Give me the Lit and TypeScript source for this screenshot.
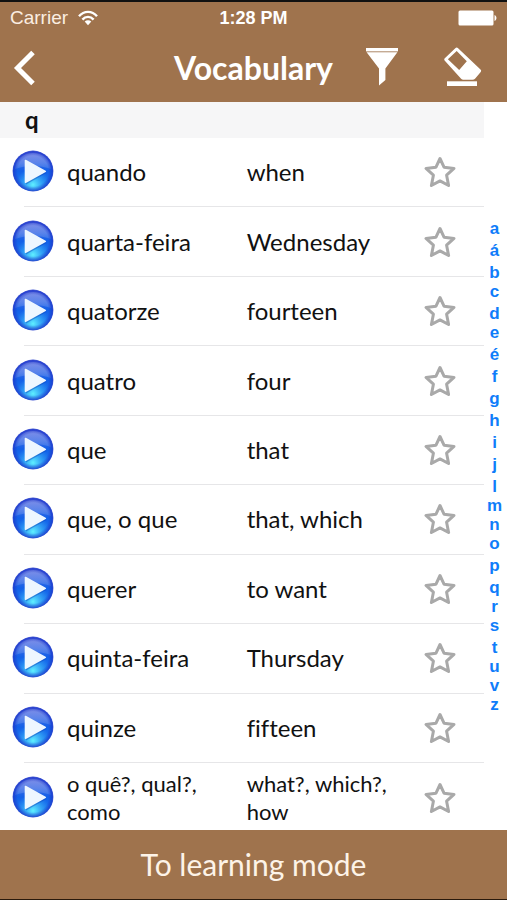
import { LitElement, html, css, svg } from "lit";
import { customElement, property, state } from "lit/decorators.js";
import { classMap } from "lit/directives/class-map.js";

interface Word {
  term: string;
  meaning: string;
}

const WORDS: Word[] = [
  { term: "quando", meaning: "when" },
  { term: "quarta-feira", meaning: "Wednesday" },
  { term: "quatorze", meaning: "fourteen" },
  { term: "quatro", meaning: "four" },
  { term: "que", meaning: "that" },
  { term: "que, o que", meaning: "that, which" },
  { term: "querer", meaning: "to want" },
  { term: "quinta-feira", meaning: "Thursday" },
  { term: "quinze", meaning: "fifteen" },
  { term: "o quê?, qual?, como", meaning: "what?, which?, how" },
];

const LETTERS = [..."aábcdeéfghijlmnopqrstuvz"];
const LOW_LETTERS = "acemnorsuvz";

@customElement("status-bar")
export class StatusBar extends LitElement {
  static styles = css`
    :host {
      display: grid;
      grid-template-columns: 1fr auto 1fr;
      align-items: center;
      height: 32px;
      padding: 0 10px;
      color: #fff;
      font: 19px "Liberation Sans", Arial, sans-serif;
    }
    .carrier {
      display: flex;
      align-items: center;
      gap: 10px;
      color: #fbeee2;
    }
    .time {
      font-weight: bold;
      font-size: 18px;
    }
    .battery {
      justify-self: end;
    }
    svg {
      display: block;
    }
  `;

  render() {
    return html`
      <span class="carrier">
        Carrier
        <svg width="20" height="16" viewBox="0 0 20 16" aria-label="Wi-Fi">
          <g fill="none" stroke="#fff" stroke-width="2.4">
            <path d="M1 6.2C6 .4 14 .4 19 6.2" />
            <path d="M4.4 9.6c3.2-3.6 8-3.6 11.2 0" />
          </g>
          <path d="M6.7 11.6c2-1.8 4.6-1.8 6.6 0L10 15.2z" fill="#fff" />
        </svg>
      </span>
      <span class="time">1:28 PM</span>
      <svg class="battery" width="39" height="16" viewBox="0 0 39 16" aria-label="Battery full">
        <rect x=".5" y=".5" width="35" height="15" rx="1.5" fill="#fff" />
        <path d="M36.5 5c2.6.8 2.6 5.2 0 6z" fill="#fff" />
      </svg>
    `;
  }
}

@customElement("word-row")
export class WordRow extends LitElement {
  @property() term = "";
  @property() meaning = "";
  @property({ type: Boolean, reflect: true }) long = false;
  @state() private starred = false;

  static styles = css`
    :host {
      display: grid;
      grid-template-columns: 42px 51fr 50fr 34px;
      column-gap: 13px;
      align-items: center;
      height: 100%;
      padding: 0 27px 0 12px;
      box-sizing: border-box;
      color: #111;
      font: 24px/28px Lato, "Open Sans", sans-serif;
      font-variant-ligatures: none;
    }
    :host([long]) {
      font-size: 22px;
    }
    button {
      display: block;
      padding: 0;
      border: 0;
      background: none;
      cursor: pointer;
    }
    svg {
      display: block;
    }
    .outline {
      fill: none;
      stroke: #a9a9a9;
      stroke-width: 3;
      stroke-linejoin: round;
    }
    .filled {
      fill: #a9a9a9;
    }
  `;

  render() {
    return html`
      <button aria-label="Play ${this.term}">
        <svg width="42" height="44" viewBox="0 0 42 44">
          <defs>
            <linearGradient id="ball" x1="0" y1="0" x2="0" y2="1">
              <stop offset="0" stop-color="#4a5cdc" />
              <stop offset=".3" stop-color="#3468e6" />
              <stop offset=".5" stop-color="#1260e8" />
              <stop offset="1" stop-color="#2488f0" />
            </linearGradient>
            <radialGradient id="glow" cx=".5" cy=".84" r=".42">
              <stop offset="0" stop-color="#5ff0ff" />
              <stop offset="1" stop-color="#38b6ff" stop-opacity="0" />
            </radialGradient>
            <linearGradient id="shine" x1="0" y1="0" x2="0" y2="1">
              <stop offset="0" stop-color="#fff" stop-opacity=".3" />
              <stop offset="1" stop-color="#fff" stop-opacity=".12" />
            </linearGradient>
            <radialGradient id="edge">
              <stop offset=".75" stop-color="#1c35c8" stop-opacity="0" />
              <stop offset="1" stop-color="#1c35c8" stop-opacity=".85" />
            </radialGradient>
          </defs>
          <circle cx="21" cy="21" r="20" fill="url(#ball)" />
          <circle cx="21" cy="21" r="20" fill="url(#glow)" />
          <path d="M3 19C4 9 11 3 21 3s17 6 18 16c-11-4-25-4-36 0z" fill="url(#shine)" />
          <circle cx="21" cy="21" r="20.400" fill="url(#edge)" />
          <path d="M14 12v22.500L34.500 23" fill="#0a3fb4" opacity=".4" />
          <path d="M13.500 10.500v21.800L33.300 21.400z" fill="#eef7ff" stroke="#eef7ff" stroke-width="1.600" stroke-linejoin="round" />
        </svg>
      </button>
      <span lang="pt">${this.term}</span>
      <span>${this.meaning}</span>
      <button
        aria-label="Mark ${this.term} as favourite"
        aria-pressed=${this.starred}
        @click=${() => (this.starred = !this.starred)}
      >
        <svg width="34" height="34" viewBox="0 0 34 34">
          <path
            class=${classMap({ outline: true, filled: this.starred })}
            d="M17 3.500l4 8.700 10 1.200-7.400 6.800 2 10.300L17 25.900 8.400 30.500l2-10.300L3 13.400l10-1.200z"
          />
        </svg>
      </button>
    `;
  }
}

@customElement("letter-index")
export class LetterIndex extends LitElement {
  static styles = css`
    :host {
      display: flex;
      flex-direction: column;
      justify-content: center;
      align-items: center;
      padding-right: 2px;
      box-sizing: border-box;
      font: bold 17px/19px "Liberation Sans", Arial, sans-serif;
    }
    a {
      color: #0f7dfa;
      text-decoration: none;
    }
    .tall {
      padding-top: 3px;
    }
  `;

  render() {
    return LETTERS.map(
      (letter) => html`<a
        href="#${letter}"
        class=${classMap({ tall: !LOW_LETTERS.includes(letter) })}
        >${letter}</a
      >`
    );
  }
}

const backIcon = svg`<path d="M20 2.500L4.500 18 20 33.500" fill="none" stroke="#fff" stroke-width="5" />`;
const filterIcon = svg`
  <path d="M1 1h32v3.400H1z" fill="#fff" />
  <path d="M1.600 5.200h30.800L20.400 21.600V33L14 38.500V21.600z" fill="#fff" />`;
const eraserIcon = svg`
  <path
    d="M.6 13.400Q-.2 12.300.8 11.300L11.300 1.200Q12.700 0 14.100 1.200L36.500 22.400Q37.700 23.700 36.700 25L31 31.700Q30 32.800 28.500 32.800H19.300Q18 32.800 17.100 31.700zM3.900 12.200L15.200 23 22.800 14.300 12.700 3.900z"
    fill="#fff" fill-rule="evenodd" />
  <path d="M3 34.300h30v4.700H3z" fill="#fff" />`;

@customElement("app-root")
export class AppRoot extends LitElement {
  static styles = css`
    :host {
      display: flex;
      flex-direction: column;
      min-height: 100vh;
      box-sizing: border-box;
      border-top: 2px solid #111;
      border-bottom: 1px solid #2a1a0c;
      background: #fff;
      font-family: Lato, "Open Sans", sans-serif;
    }
    .top {
      background: #9f734d;
    }
    .bar {
      display: grid;
      grid-template-columns: 1fr auto 1fr;
      align-items: center;
      height: 68px;
      padding: 0 13px;
      box-sizing: border-box;
    }
    h1 {
      margin: 0;
      color: #fff;
      font-size: 32px;
      font-weight: bold;
      line-height: 66px;
    }
    button {
      padding: 0;
      border: 0;
      background: none;
      cursor: pointer;
    }
    .bar svg {
      display: block;
    }
    .back {
      justify-self: start;
    }
    .tools {
      display: flex;
      justify-content: space-between;
      align-items: center;
      padding: 0 11px 2px 32px;
    }
    .main {
      display: flex;
      flex: 1;
    }
    .words {
      display: flex;
      flex: 1;
      flex-direction: column;
    }
    h2 {
      margin: 0;
      padding-left: 25px;
      background: #f6f6f7;
      color: #111;
      font-size: 24px;
      line-height: 36px;
    }
    ul {
      display: flex;
      flex: 1;
      flex-direction: column;
      margin: 0;
      padding: 0;
      list-style: none;
    }
    li {
      flex: 1;
      padding-bottom: 1px;
      background: linear-gradient(#e6e6e8, #e6e6e8) 24px 100% / 100% 1px no-repeat;
    }
    li:last-child {
      flex: none;
      height: 63px;
      padding: 4px 0 0;
      background: none;
    }
    letter-index {
      width: 23px;
    }
    .learn {
      height: 69px;
      padding-bottom: 2px;
      background: #9f734d;
      color: #fdf3e8;
      font: 30px Lato, "Open Sans", sans-serif;
    }
  `;

  render() {
    return html`
      <header class="top">
        <status-bar></status-bar>
        <nav class="bar">
          <button class="back" aria-label="Back">
            <svg width="24" height="36" viewBox="0 0 24 36">${backIcon}</svg>
          </button>
          <h1>Vocabulary</h1>
          <div class="tools">
            <button aria-label="Filter">
              <svg width="34" height="40" viewBox="0 0 34 40">${filterIcon}</svg>
            </button>
            <button aria-label="Erase">
              <svg width="39" height="40" viewBox="0 0 39 40">${eraserIcon}</svg>
            </button>
          </div>
        </nav>
      </header>
      <main class="main">
        <section class="words">
          <h2>q</h2>
          <ul>
            ${WORDS.map(
              (word) => html`<li>
                <word-row
                  .term=${word.term}
                  .meaning=${word.meaning}
                  ?long=${word.term.length > 14}
                ></word-row>
              </li>`
            )}
          </ul>
        </section>
        <letter-index></letter-index>
      </main>
      <button class="learn">To learning mode</button>
    `;
  }
}
